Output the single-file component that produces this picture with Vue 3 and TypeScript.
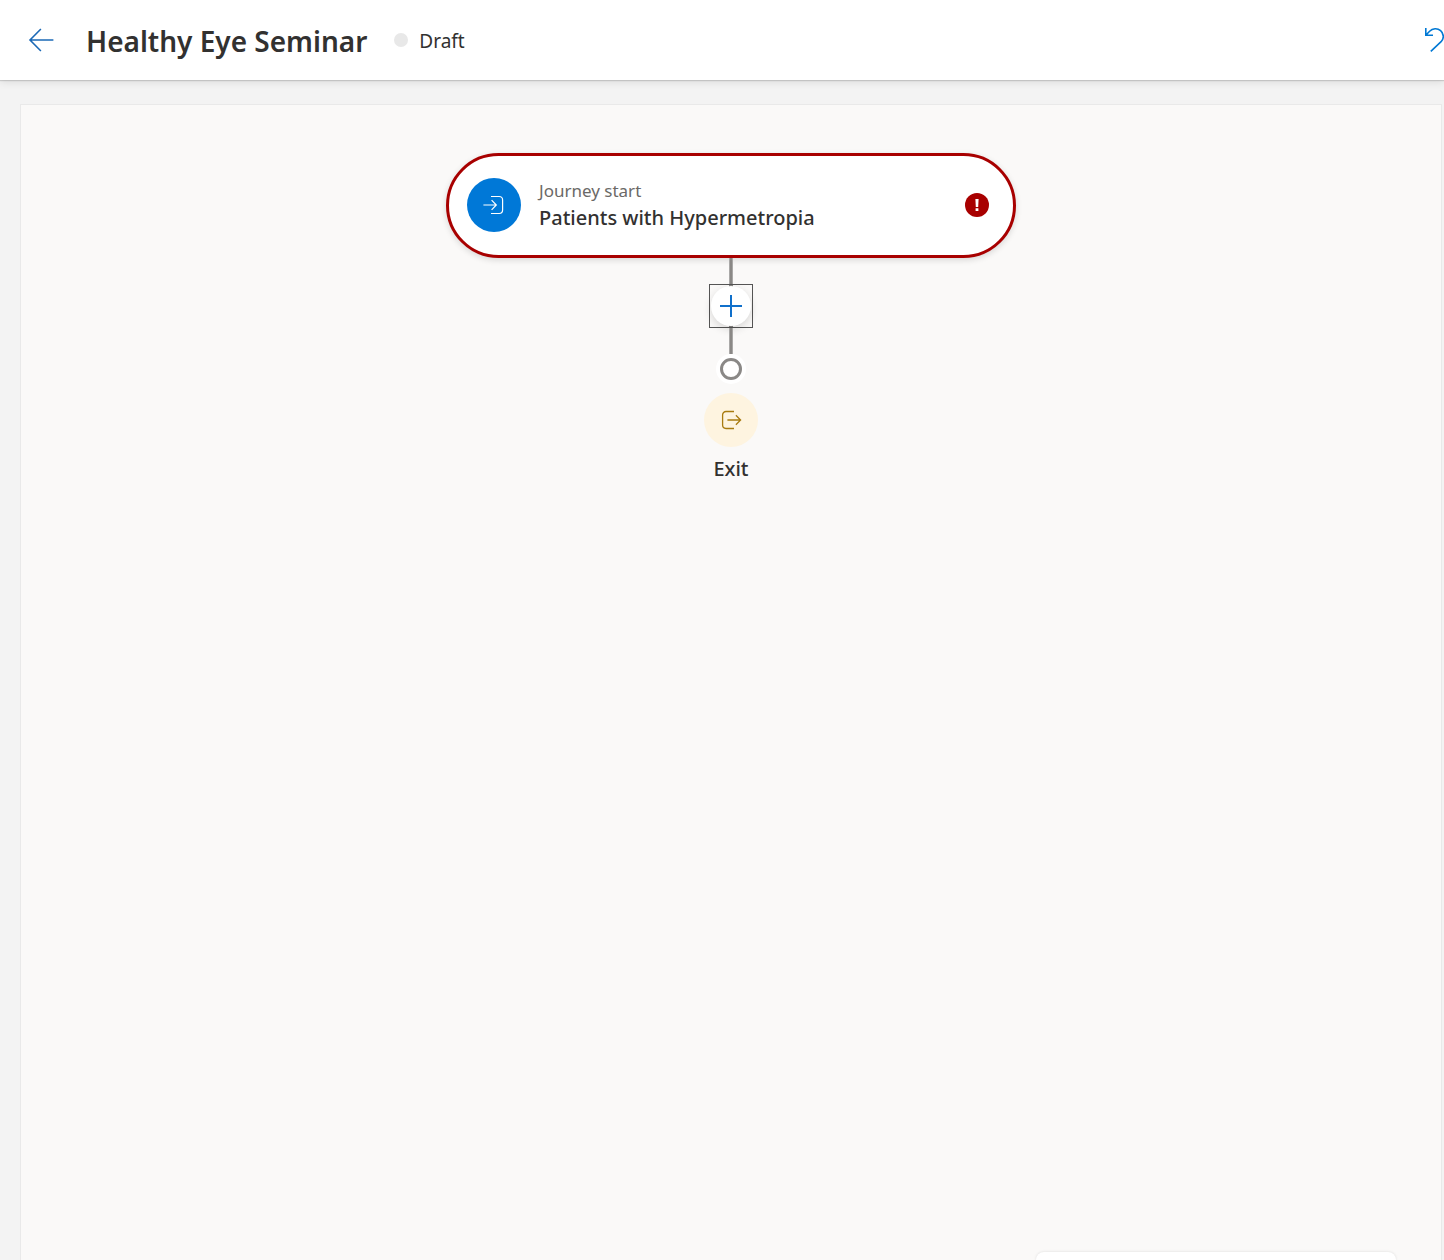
<script setup lang="ts">
interface Journey {
  name: string
  status: string
  trigger: string
  segment: string
}

const journey: Journey = {
  name: 'Healthy Eye Seminar',
  status: 'Draft',
  trigger: 'Journey start',
  segment: 'Patients with Hypermetropia',
}
</script>

<template>
  <div class="page">
    <header class="bar">
      <button class="icon-button" type="button" aria-label="Back">
        <svg width="26" height="24" viewBox="0 0 26 24" fill="none" stroke="#1b69b6" stroke-width="1.6">
          <path d="M12.9 1 2 12l10.9 11M2 12H25.4" />
        </svg>
      </button>
      <h1 class="title">{{ journey.name }}</h1>
      <span class="dot"></span>
      <span class="status">{{ journey.status }}</span>
      <button class="icon-button undo" type="button" aria-label="Undo">
        <svg width="24" height="26" viewBox="0 0 24 26" fill="none" stroke="#0078d4" stroke-width="1.6">
          <path d="M1.8 1v7.2H9M1.8 8.2 5.6 4.2C8.6 1.2 13.4 .9 16.6 3.6c3.4 3 3.6 8 .5 11.1L6.8 24.4" />
        </svg>
      </button>
    </header>

    <main class="canvas">
      <section class="card">
        <span class="badge start">
          <svg width="22" height="20" viewBox="0 0 22 20" fill="none" stroke="#fff" stroke-width="1.2">
            <path d="M.4 10h13M8.6 5.2l4.7 4.8-4.7 4.8M8 1.5h8.2a3.4 3.4 0 0 1 3.4 3.4v10.2a3.4 3.4 0 0 1-3.4 3.4H8" />
          </svg>
        </span>
        <div class="labels">
          <span class="caption">{{ journey.trigger }}</span>
          <strong class="name">{{ journey.segment }}</strong>
        </div>
        <svg class="alert" width="24" height="24" viewBox="0 0 24 24" role="img" aria-label="Error">
          <circle cx="12" cy="12" r="12" fill="#a80000" />
          <path d="M10.4 6h3.2l-.4 8h-2.4zM10.6 15.2h2.8V18h-2.8z" fill="#fff" />
        </svg>
      </section>
      <span class="line"></span>
      <button class="add" type="button" aria-label="Add an element">
        <span class="disc">
          <svg width="22" height="22" viewBox="0 0 22 22" stroke="#1070cb" stroke-width="2">
            <path d="M11 0v22M0 11h22" />
          </svg>
        </span>
      </button>
      <span class="line"></span>
      <span class="end"></span>
      <span class="badge exit">
        <svg width="22" height="20" viewBox="0 0 22 20" fill="none" stroke="#a87b10" stroke-width="1.3">
          <path d="M7.4 10h13M15.9 5.2l4.7 4.8-4.7 4.8M14 1.5H6a3.4 3.4 0 0 0-3.4 3.4v10.2A3.4 3.4 0 0 0 6 18.5h8" />
        </svg>
      </span>
      <strong class="name exit-label">Exit</strong>
      <aside class="tray"></aside>
    </main>
  </div>
</template>

<style>
body {
  margin: 0;
}
</style>

<style scoped>
* {
  box-sizing: border-box;
}

.page {
  display: flex;
  flex-direction: column;
  min-height: 100vh;
  overflow: hidden;
  background: #f3f3f3;
  color: #323130;
  font-family: "Segoe UI", "Noto Sans", "Open Sans", sans-serif;
}

.bar {
  position: relative;
  display: flex;
  align-items: center;
  height: 80px;
  padding-left: 28px;
  background: #fff;
  box-shadow: 0 1px 1px rgba(0, 0, 0, 0.14), 0 2px 8px rgba(0, 0, 0, 0.1);
}

.icon-button {
  display: flex;
  flex: none;
  padding: 0;
  border: 0;
  background: none;
}

.undo {
  margin-right: -4px;
  margin-left: auto;
}

.title {
  margin: 0 27px 0 32px;
  padding-top: 2px;
  font-size: 28px;
  font-weight: 600;
  line-height: 40px;
}

.dot {
  width: 14px;
  height: 14px;
  margin-right: 11px;
  border-radius: 50%;
  background: #e8e8e8;
}

.status {
  padding-top: 2px;
  font-size: 19px;
  line-height: 28px;
}

.canvas {
  position: relative;
  display: flex;
  flex: 1;
  flex-direction: column;
  align-items: center;
  margin: 24px 2px 0 20px;
  padding-top: 48px;
  border: 1px solid #e9e9e9;
  border-bottom: 0;
  background: #faf9f8;
}

.card {
  display: flex;
  align-items: center;
  width: 570px;
  max-width: 100%;
  height: 105px;
  padding: 0 24px 1px 18px;
  border: 3px solid #a80000;
  border-radius: 53px;
  background: #fff;
  box-shadow: 0 2px 6px rgba(0, 0, 0, 0.14);
}

.badge {
  display: flex;
  flex: none;
  align-items: center;
  justify-content: center;
  width: 54px;
  height: 54px;
  border-radius: 50%;
}

.start {
  background: #0078d7;
}

.labels {
  display: flex;
  flex: 1;
  flex-direction: column;
  margin-left: 18px;
}

.caption {
  color: #6b6967;
  font-size: 17px;
  line-height: 26px;
}

.name {
  font-size: 20px;
  font-weight: 500;
  line-height: 28px;
}

.alert {
  flex: none;
}

.line {
  width: 4px;
  height: 26px;
  border: solid #a9a8a7;
  border-width: 0 1px;
  background: #8a8886;
}

.add {
  display: flex;
  align-items: center;
  justify-content: center;
  width: 44px;
  height: 44px;
  padding: 0;
  border: 1px solid #555;
  background: linear-gradient(#8a8886, #8a8886) center / 4px 100% no-repeat;
}

.disc {
  display: flex;
  align-items: center;
  justify-content: center;
  width: 40px;
  height: 40px;
  border-radius: 50%;
  background: #fff;
  box-shadow: 0 3px 8px rgba(0, 0, 0, 0.14);
}

.end {
  display: flex;
  width: 30px;
  height: 30px;
  margin-bottom: 9px;
  padding: 4px;
  border-radius: 50%;
  background: #fff;
}

.end::before {
  flex: 1;
  border: 3px solid #8a8886;
  border-radius: 50%;
  content: "";
}

.exit {
  background: #fef4e0;
}

.exit-label {
  margin-top: 8px;
}

.tray {
  position: absolute;
  right: 45px;
  bottom: 0;
  width: 360px;
  height: 8px;
  border-radius: 8px 8px 0 0;
  background: #fff;
  box-shadow: 0 0 3px rgba(0, 0, 0, 0.12);
}
</style>
